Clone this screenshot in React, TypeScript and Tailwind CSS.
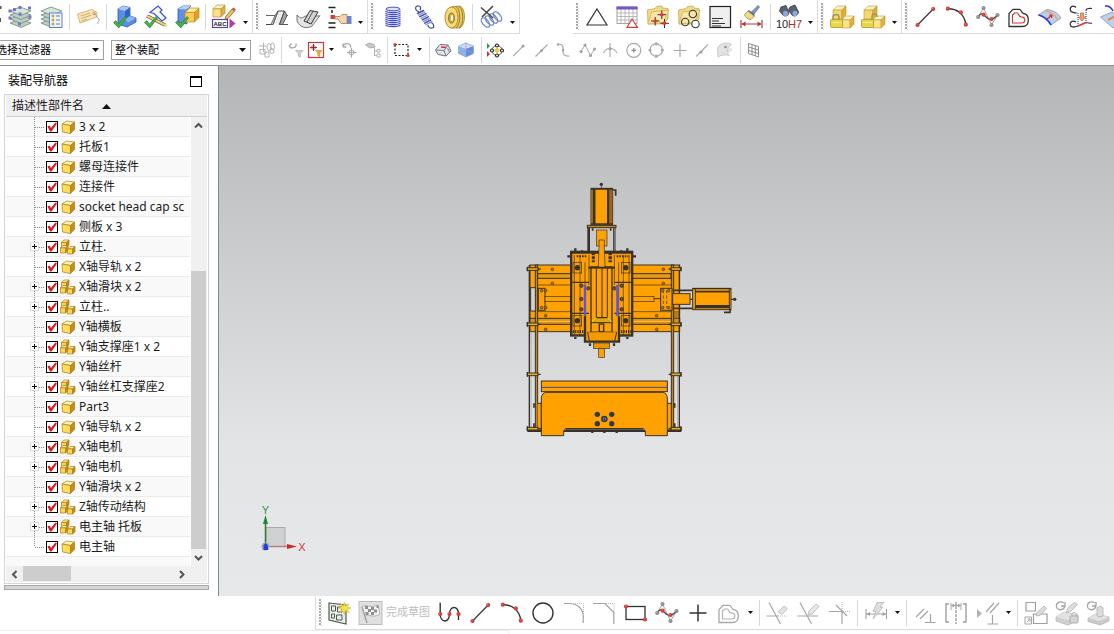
import { useState } from "react";
import type { ReactNode } from "react";

/* ---------- toolbar building blocks ---------- */

function Icon({ size = 26, children }: { size?: number; children: ReactNode }) {
  return (
    <svg width={size} height={size} viewBox={`0 0 ${size} ${size}`} fill="none" aria-hidden="true" className="shrink-0">
      {children}
    </svg>
  );
}

function Tool({ label, children }: { label: string; children: ReactNode }) {
  return (
    <button type="button" aria-label={label} className="flex w-[31px] shrink-0 items-center justify-center hover:bg-sky-50">
      <Icon>{children}</Icon>
    </button>
  );
}

function SmallTool({ label, children }: { label: string; children: ReactNode }) {
  return (
    <button type="button" aria-label={label} className="flex w-[23px] shrink-0 items-center justify-center hover:bg-sky-50">
      <Icon size={20}>{children}</Icon>
    </button>
  );
}

function More({ low = true }: { low?: boolean }) {
  return (
    <button type="button" aria-label="更多" className={low ? "flex w-[13px] shrink-0 items-center justify-center pt-3" : "flex w-[13px] shrink-0 items-center justify-center"}>
      <svg width="5" height="3" viewBox="0 0 5 3" aria-hidden="true">
        <path d="M0 0H5L2.500 3Z" fill="#111" />
      </svg>
    </button>
  );
}

function Sep({ tight = false }: { tight?: boolean }) {
  return (
    <span className={tight ? "flex w-[5px] shrink-0 items-center justify-center" : "flex w-[6px] shrink-0 items-center justify-center"}>
      <span className="h-[26px] w-px bg-[#d9d9d9]" />
    </span>
  );
}

function Grip() {
  return (
    <svg width="8" height="33" viewBox="0 0 8 33" className="shrink-0" aria-hidden="true">
      <path d="M4 3V30" stroke="#a9a9a9" strokeWidth="2" strokeDasharray="2 1" />
      <path d="M5.500 5V30" stroke="#d6d6d6" strokeWidth="1" strokeDasharray="1 2" />
    </svg>
  );
}

function Group({ children }: { children: ReactNode }) {
  return <div className="flex h-[34px] shrink-0 border-r border-b border-[#dcdcdc]">{children}</div>;
}

/* ---------- shared drawings ---------- */

const RED = "#d23a32";

function Dot({ x, y, c = RED, r = 2.1 }: { x: number; y: number; c?: string; r?: number }) {
  return (
    <>
      <circle cx={x} cy={y} r={r} fill={c} />
      <circle cx={x - 0.5} cy={y - 0.5} r={r / 3} fill="#fff" opacity="0.35" />
    </>
  );
}

const GreenCheck = () => (
  <path d="M1.500 18.500L4 16.800L6.500 20.200L13 12.500L14.500 14L6.800 24Z" fill="#4cae50" stroke="#2c8a3a" strokeWidth="0.8" />
);

const LineDrawing = () => (
  <>
    <path d="M4.500 21L20.200 5" stroke="#333" strokeWidth="1.200" />
    <Dot x={4.5} y={21} />
    <Dot x={20.2} y={5} />
  </>
);

const ArcDrawing = () => (
  <>
    <path d="M3.800 4.700C12 4.500 20.500 9 21.800 20.700" stroke="#333" strokeWidth="1.400" />
    <Dot x={3.8} y={4.7} />
    <Dot x={16.8} y={8.3} />
    <Dot x={21.8} y={20.7} />
  </>
);

const SplineDrawing = () => (
  <>
    <path d="M3.200 13L8.500 4L16.500 21L22.500 11" stroke="#a5a5a5" strokeWidth="1" />
    <path d="M3.200 13C6 8 8 10 10 12C13 15.500 17 17.500 22.500 11" stroke="#444" strokeWidth="1.200" />
    <Dot x={8.5} y={4} c="#8d8d8d" />
    <Dot x={3.2} y={13} c="#8d8d8d" />
    <Dot x={16.5} y={21} c="#8d8d8d" />
    <Dot x={22.5} y={11} c="#8d8d8d" />
    <Dot x={8.5} y={10.7} />
    <Dot x={16.5} y={15} />
  </>
);

function OffsetDrawing({ outer, inner }: { outer: string; inner: string }) {
  return (
    <>
      <path d="M3 22.500V9.500L7 5.300H13.500C15 5.300 15.300 9 17.500 9.500C21 10 22.300 13 22.300 16C22.300 20 20 22.500 16.500 22.500Z" stroke={outer} strokeWidth="1.300" />
      <path d="M6.500 19V11L8.500 9H11.500C12.500 9 12.500 12.500 15 12.800C18 13 18.800 14.500 18.800 16C18.800 18 17.500 19 15.500 19Z" stroke={inner} strokeWidth="1.200" />
    </>
  );
}

const Folder = () => (
  <>
    <path d="M1.500 6L9 4.500L10.500 2.500L16 2L16.500 4L22 4.500V15L17 20H2Z" fill="#f2d98a" stroke="#caa84e" strokeWidth="0.800" />
    <path d="M2 20L5.500 8L23 6L17.500 18.500Z" fill="#f8e6a8" stroke="#cfae56" strokeWidth="0.800" />
  </>
);

const Layers = () => (
  <>
    {[19, 15, 11, 7].map((t) => (
      <path key={t} d={`M3 ${t}L13 ${t - 4}L24 ${t}L14 ${t + 4.5}Z`} fill={t === 7 ? "#d3e6da" : "#bccdc3"} stroke="#7b9688" strokeWidth="0.900" />
    ))}
  </>
);

type CubeProps = { x: number; y: number; s: number; top?: string; left?: string; right?: string; line?: string; w?: number };

function Cube({ x, y, s, top = "#fff0a0", left = "#ffd652", right = "#c98c14", line = "#a67c1c", w = 0.7 }: CubeProps) {
  const d = s * 0.32;
  return (
    <g stroke={line} strokeWidth={w} strokeLinejoin="round">
      <path d={`M${x} ${y + d}L${x + d} ${y}H${x + s}L${x + s - d} ${y + d}Z`} fill={top} />
      <path d={`M${x} ${y + d}H${x + s - d}V${y + s}H${x}Z`} fill={left} />
      <path d={`M${x + s - d} ${y + d}L${x + s} ${y}V${y + s - d}L${x + s - d} ${y + s}Z`} fill={right} />
    </g>
  );
}

const BlueBracket = () => (
  <>
    <path d="M6 5L11 2L18 3.500V12L24 14V18L15 23L6 20Z" fill="#5b8de0" stroke="#2c58b0" strokeWidth="0.800" />
    <path d="M6 5L11 2L18 3.500L13 7Z" fill="#a9c8f6" />
    <path d="M13 7L18 3.500V12L13 15.500Z" fill="#2f62c4" />
    <path d="M13 15.500L18 12L24 14L16 18.500Z" fill="#8db5f2" />
  </>
);

function Locked({ open = false }: { open?: boolean }) {
  return (
    <>
      <Cube x={4} y={2} s={13} top="#fdf2bb" left="#f6d972" right="#dcae3c" line="#c0952c" w={0.6} />
      <Cube x={13} y={12} s={12} top="#fef6cf" left="#fbe48c" right="#e0b244" line="#c0952c" w={0.6} />
      <path d={open ? "M12 16V12.500C12 9 17 9 17 13" : "M4 16V13C4 9.500 10 9.500 10 13V16"} stroke="#9a9768" strokeWidth="1.500" />
      <rect x="1.500" y="15.500" width="12" height="8" rx="1" fill="#e8d64a" stroke="#a8962a" strokeWidth="0.800" />
      <path d="M2.500 18.500H12.500" stroke="#f6ec8d" strokeWidth="1" />
    </>
  );
}

/* ---------- toolbars ---------- */

function MainToolbar() {
  return (
    <div className="flex h-[34px] overflow-hidden">
      <Group>
        <svg width="4" height="33" viewBox="0 0 4 33" aria-hidden="true" className="shrink-0">
          <path d="M0 6H1.500V9H0ZM0 18H1V22H0Z" fill="#555" />
        </svg>
        <Tool label="图层设置">
          <Layers />
          {[[3, 7], [13, 3.5], [22.5, 4], [13, 10], [3, 14], [23, 13], [12.5, 20], [7.5, 5.5]].map(([x, y]) => (
            <rect key={`${x}-${y}`} x={x - 1.5} y={y - 1.5} width="3" height="3" fill="#7d74c4" />
          ))}
        </Tool>
        <Tool label="图层类别">
          <Layers />
          <rect x="11.500" y="9" width="12.500" height="14.500" fill="#eef3fc" stroke="#5e80c4" />
          <path d="M14 11H16V13H14ZM14 15H16V17H14ZM14 19H16V21H14Z" fill="#e8c84c" stroke="#9a8430" strokeWidth="0.500" />
          <path d="M18 12H22M18 16H22M18 20H22" stroke="#6c7fa8" />
        </Tool>
        <Sep />
        <Tool label="注释">
          <path d="M2.500 10L17 5.500L22 8.500L21.500 13L5 19Z" fill="#f9e4b8" stroke="#d8ae68" strokeWidth="0.900" />
          <path d="M5.500 12L15 9M6 14.500L16 11.300M6.500 17L12 15.200" stroke="#c49a5c" strokeWidth="0.800" />
          <circle cx="19" cy="9.500" r="1.200" fill="#fff" stroke="#a5793c" strokeWidth="0.700" />
          <path d="M19 9.500C22 10 21 14 24 15C25 17 22 18 23 20" stroke="#8f8f8f" strokeWidth="0.800" />
        </Tool>
        <Sep />
        <Tool label="检查零件">
          <BlueBracket />
          <GreenCheck />
        </Tool>
        <Tool label="检查草图">
          <path d="M7 8.500L15 2L19 6L17 8L23 14L19 17L11 9.500Z" fill="#f8faff" stroke="#3c4fd0" strokeWidth="1.200" />
          <path d="M4 12L22 21" stroke="#4f4a36" strokeWidth="3.600" />
          <path d="M4 12L24 22" stroke="#ead37a" strokeWidth="2.200" />
          <GreenCheck />
        </Tool>
        <Tool label="检查装配">
          <path d="M4 5L9 2H17L13 6V20L4 18Z" fill="#5f92e4" stroke="#2c58b0" strokeWidth="0.800" />
          <path d="M4 5L9 2H17L12 5.500Z" fill="#b5d0f8" />
          <Cube x={11} y={4} s={14} top="#ffe993" left="#fccd52" right="#e39e2c" line="#c48a20" />
          <GreenCheck />
        </Tool>
        <Sep />
        <Tool label="属性">
          <Cube x={2} y={1} s={12} top="#fdf3c2" left="#fae086" right="#dfae44" line="#bb9030" />
          <path d="M21 5L23.500 7L17 14.500L14 15.500L14.800 12.500Z" fill="#f0c35a" stroke="#8a5a2a" strokeWidth="0.800" />
          <path d="M21 5L22.500 3.500L24.800 5.500L23.500 7Z" fill="#c94a43" />
          <rect x="1.500" y="15.500" width="15" height="8" fill="#fff" stroke="#5a479c" strokeWidth="1.200" />
          <text x="9" y="21.600" textAnchor="middle" fontSize="6" fontWeight="bold" fontFamily="Liberation Sans, sans-serif" fill="#222">ABC</text>
          <path d="M18.500 14.500L24.500 19.500L18.500 24.500Z" fill="#b03ab0" />
        </Tool>
        <More />
      </Group>
      <Group>
        <Grip />
        <Tool label="凸台">
          <path d="M2 11.500H11M19 11.500H24" stroke="#666" strokeWidth="1" />
          <path d="M2 20.500H9L14 7H20.500L15.500 20.500" fill="#eceded" stroke="#444" strokeWidth="1" />
          <path d="M20.500 7L23 11.500L18.500 20.500H15.500Z" fill="#a4a7a6" stroke="#444" strokeWidth="0.900" />
          <path d="M14 7L11 11.500L7 20.500H9Z" fill="#c6c8c7" stroke="#555" strokeWidth="0.800" />
          <path d="M18.500 20.500H24" stroke="#555" strokeWidth="1" />
        </Tool>
        <Tool label="曲面凸台">
          <path d="M2 11C5 15 8 14 10 12L21 12C23 12 24 12 25 11.500L17 22C12 25 5 24 2 17Z" fill="#e2e4e3" stroke="#666" strokeWidth="0.900" />
          <path d="M9 17L15 6.500L23 8L16 20Z" fill="#cfd2d1" stroke="#333" strokeWidth="1" />
          <path d="M12 18L18 7.200" stroke="#444" strokeWidth="0.900" />
        </Tool>
        <Tool label="选择对象">
          <path d="M2.500 3.500H9.500M2.500 23.500H9.500M2.500 19H9.500" stroke="#222" strokeWidth="1.500" />
          <path d="M6 6V9" stroke="#222" strokeWidth="1.500" />
          <rect x="4.500" y="11" width="4.500" height="4" fill="#d0413c" />
          <path d="M9 12.500H14L16 10.500H21V19.500H15L12 15H9Z" fill="#f5d6ac" stroke="#b08a5e" strokeWidth="0.900" />
          <path d="M21 12H25.500V20H21Z" fill="#6c84d6" />
        </Tool>
        <More />
      </Group>
      <Group>
        <Grip />
        <Tool label="圆柱弹簧">
          <ellipse cx="14" cy="5" rx="7" ry="1.800" fill="#dfe3f8" stroke="#3442b4" strokeWidth="0.900" />
          {[7, 9, 11, 13, 15, 17, 19, 21].map((y) => (
            <path key={y} d={`M7 ${y}C7 ${y + 2} 21 ${y + 2} 21 ${y}`} stroke="#4150c0" strokeWidth="1.300" />
          ))}
          <path d="M7 5V21M21 5V21" stroke="#7f8ad6" strokeWidth="0.700" />
        </Tool>
        <Tool label="拉伸弹簧">
          <path d="M9 8C4 6 5 1 9 2C11 2.500 11 5 10 6M20 18C25 20 25 25 20 24C18 23.500 18 22 18 21" stroke="#3b478c" strokeWidth="1.200" />
          {[0, 1, 2, 3, 4, 5, 6, 7].map((i) => (
            <path key={i} d={`M${7.5 + i * 1.2} ${9.5 + i * 1.6}L${13.5 + i * 1.2} ${6.5 + i * 1.6}`} stroke={i % 2 ? "#8f9ad8" : "#3f4ba2"} strokeWidth="1.500" strokeLinecap="round" />
          ))}
        </Tool>
        <Tool label="碟形弹簧">
          <path d="M10 3L19 2C25 5 25 20 19 24L10 24Z" fill="#eccb58" stroke="#9c7d28" strokeWidth="0.800" />
          <path d="M15 2.500C20 6 20 20 15 24M18 2.500C23 6 23 20 18 24" stroke="#8c7534" strokeWidth="0.900" />
          <ellipse cx="10.500" cy="13.500" rx="6.500" ry="10.500" fill="#f6dc78" stroke="#a5862e" strokeWidth="0.900" />
          <ellipse cx="10.500" cy="14" rx="2.800" ry="5" fill="#d2ae48" stroke="#7c6018" strokeWidth="0.900" />
          <ellipse cx="11" cy="14" rx="1.200" ry="3" fill="#fff" />
        </Tool>
        <Sep />
        <Tool label="删除弹簧">
          {[0, 1, 2, 3].map((i) => (
            <ellipse key={i} cx={7.5 + i * 4} cy={18.5 - i * 2} rx="3" ry="5.500" transform={`rotate(-40 ${7.5 + i * 4} ${18.5 - i * 2})`} stroke="#6d83c8" strokeWidth="1.300" />
          ))}
          <path d="M3 3.500L15 14M15 2L4 13" stroke="#4a4a4a" strokeWidth="1.600" />
        </Tool>
        <More />
      </Group>
      <div className="ml-[53px] flex">
        <Group>
          <Grip />
          <Tool label="三角形符号">
            <path d="M13 5L23 21H3Z" stroke="#333" strokeWidth="1.200" />
          </Tool>
          <Tool label="表格">
            <rect x="2" y="3" width="20" height="16.500" fill="#fff" stroke="#999" strokeWidth="0.900" />
            <path d="M2 9H22M2 12.500H22M2 16H22M6 5V19.500M10 5V19.500M14 5V19.500M18 5V19.500" stroke="#aaa" strokeWidth="0.800" />
            <path d="M1.500 2.500H22.500V5.500H1.500Z" fill="#7656c8" />
            <path d="M17 15L22.500 23.300H12Z" fill="#fff" stroke="#c8403c" strokeWidth="1.200" />
          </Tool>
          <Tool label="点集">
            <Folder />
            <path d="M11.500 10.700H20M15.800 6.500V15M5 17H13.500M9.200 13V21.500M14.500 19.300H23M18.500 15V24" stroke="#333" strokeWidth="1" />
            <Dot x={15.8} y={10.7} c="#f0241c" r={1.8} />
            <Dot x={9.2} y={17} c="#f0241c" r={1.8} />
            <Dot x={18.5} y={19.3} c="#f0241c" r={1.8} />
          </Tool>
          <Tool label="圆集">
            <Folder />
            <g stroke="#333" strokeWidth="1.100">
              <circle cx="15.800" cy="10" r="3.700" />
              <circle cx="8.200" cy="18" r="3.700" />
              <circle cx="18.500" cy="20" r="3.700" fill="#fff" />
            </g>
          </Tool>
          <Tool label="技术要求">
            <rect x="2" y="2.500" width="20.500" height="21" fill="#eef0f0" stroke="#222" strokeWidth="1.200" />
            <path d="M4 14.500H15M4 17H11M4 19.500H17M4 22H13" stroke="#333" strokeWidth="1" />
          </Tool>
          <Tool label="尺寸样式">
            <path d="M2 16V24M23 16V24M3 20H22" stroke="#b0383a" strokeWidth="1.200" />
            <path d="M2.500 20L6.500 17.500V22.500ZM22.500 20L18.500 17.500V22.500Z" fill="#b0383a" />
            <path d="M19 1.500L20.500 3L15 10L12.500 8Z" fill="#7f98c6" stroke="#4d6492" strokeWidth="0.700" />
            <path d="M9 7L15.500 12L12 15.500C9 15.500 6 13 5.500 10.500Z" fill="#f3d982" stroke="#a58840" strokeWidth="0.800" />
            <path d="M9.500 6.500L15.500 11.500" stroke="#5b6a8a" strokeWidth="1.600" />
          </Tool>
          <Sep />
          <Tool label="查找公差">
            <path d="M5 3L10 1.500L13 9C12 12 9 13 7 11L3.500 7Z" fill="#5a6172" stroke="#2f3540" strokeWidth="0.800" />
            <path d="M14 3L19 1L22.500 8C22 12 18 13 16 11L12.500 6Z" fill="#5a6172" stroke="#2f3540" strokeWidth="0.800" />
            <ellipse cx="9.500" cy="9.500" rx="2.500" ry="2.800" fill="#8fa8dc" />
            <ellipse cx="19" cy="9.500" rx="2.500" ry="2.800" fill="#8fa8dc" />
            <text x="0" y="24" fontSize="11" fontFamily="Liberation Sans, sans-serif" fill="#222">10</text>
            <text x="12" y="24" fontSize="11" fontFamily="Liberation Sans, sans-serif" fill="#a82c2c">H7</text>
          </Tool>
          <More />
        </Group>
      </div>
      <Group>
        <Grip />
        <Tool label="锁定组件">
          <Locked />
        </Tool>
        <Tool label="解锁组件">
          <Locked open />
        </Tool>
        <More />
      </Group>
      <Group>
        <Grip />
        <Tool label="直线">
          <LineDrawing />
        </Tool>
        <Tool label="圆弧">
          <ArcDrawing />
        </Tool>
        <Tool label="艺术样条">
          <SplineDrawing />
        </Tool>
        <Tool label="偏置曲线">
          <OffsetDrawing outer="#333" inner={RED} />
        </Tool>
        <Tool label="面上偏置">
          <path d="M1.500 11C6 12 11 16 14 21L24 14C21 9 16 6 10 5.500Z" fill="#bcd0ea" stroke="#7f93b4" strokeWidth="0.800" />
          <path d="M1.500 11C6 12 11 16 14 21" stroke="#2836e0" strokeWidth="1.600" />
          <path d="M7.500 6.500C13 7.500 18 11 21 16" stroke="#f0a070" strokeWidth="1.400" />
          <path d="M10 15L15 11M15 11L12 11M15 11L14.500 14" stroke="#c8322c" strokeWidth="1.200" />
        </Tool>
        <Tool label="投影曲线">
          <path d="M8 3.500C5 1 2 2.500 2.200 5.500C2.500 9 6 8.500 8.500 9M8 18C5 16 2 17.500 2.200 20.500C2.500 23.500 6 23.500 10 22" stroke="#333" strokeWidth="1.300" />
          <path d="M18 6C19 4 21 4.500 24 4.500M18 19C20 18 22 20 24 19" stroke="#333" strokeWidth="1.200" />
          <path d="M10 9V22M18 6V19" stroke="#3a3ad0" strokeWidth="1.200" strokeDasharray="1 1" />
          <path d="M10 22L18 18.500" stroke="#e03028" strokeWidth="1.500" />
          <path d="M12.500 9H15.500V13H17.500L14 17L10.500 13H12.500Z" fill="#f0a060" stroke="#b0682c" strokeWidth="0.700" />
        </Tool>
        <Tool label="组合投影">
          <path d="M1.500 13L13 8L25 16L14 24Z" fill="#bcd0ea" stroke="#7f93b4" strokeWidth="0.800" />
          <path d="M6 2C10 1.500 12 3 14 7" stroke="#2836e0" strokeWidth="1.500" />
          <path d="M9 16L16 12" stroke="#e87830" strokeWidth="1.600" />
        </Tool>
      </Group>
    </div>
  );
}

function FilterSelect({ label, value, wide = false }: { label: string; value: string; wide?: boolean }) {
  return (
    <label className={wide ? "relative ml-[7px] flex w-[140px] shrink-0 items-center" : "relative -ml-2 flex w-28 shrink-0 items-center"}>
      <span className="sr-only">{label}</span>
      <select className="h-5 w-full appearance-none border border-[#a0a0a0] bg-white pl-[3px] text-[11px] leading-[18px] text-black">
        <option>{value}</option>
      </select>
      <svg width="7" height="4" viewBox="0 0 7 4" className="pointer-events-none absolute right-[5px]" aria-hidden="true">
        <path d="M0 0H7L3.500 4Z" fill="#111" />
      </svg>
    </label>
  );
}

const G = "#a8a8a8";

function SelectionBar() {
  return (
    <div className="flex h-8 overflow-hidden border-b border-[#8b8f90]">
      <div className="flex items-center">
        <FilterSelect label="类型过滤器" value="选择过滤器" />
        <FilterSelect label="选择范围" value="整个装配" wide />
      </div>
      <div className="ml-1 flex">
        <SmallTool label="装配约束">
          <g stroke="#b4b4b4" strokeWidth="1">
            <path d="M6.500 2.500V12M2 6H9.500M3 9.500H8V14H3ZM8 12H12V17H8Z" />
            <ellipse cx="12" cy="7" rx="2" ry="3.500" />
            <ellipse cx="15.500" cy="6.500" rx="2" ry="3.500" />
            <ellipse cx="15" cy="11" rx="2" ry="2.500" />
          </g>
        </SmallTool>
        <Sep />
        <SmallTool label="重置过滤器">
          <path d="M3 6C4 8.500 9 8.500 10 6V3.500M3 6L5.500 3.500M3 6L5.500 8.500" stroke={G} strokeWidth="1.300" />
          <path d="M9.500 10.500H17L14.300 13.500V17L12.300 16V13.500Z" fill="#d4d4d4" stroke="#b5b5b5" strokeWidth="0.800" />
        </SmallTool>
        <button type="button" aria-label="捕捉过滤器" aria-pressed="true" className="flex w-[18px] shrink-0 items-center justify-center">
          <svg width="18" height="18" viewBox="0 0 18 18" fill="none" aria-hidden="true">
            <rect x="1.500" y="1.500" width="15" height="15" fill="#fdfdfd" stroke="#cf3438" strokeWidth="1.200" />
            <path d="M6.500 3V10M3 6.500H10" stroke="#7c2f2f" strokeWidth="1" />
            <circle cx="6.500" cy="6.500" r="2" stroke="#b04a4a" strokeWidth="0.800" />
            <path d="M8.500 9.500H15L12.800 12V15.500L10.800 14.500V12Z" fill="#f0a53c" stroke="#cf8d2c" strokeWidth="0.600" />
          </svg>
        </button>
        <More low={false} />
        <SmallTool label="还原选择">
          <path d="M3 7C4 2.500 10 2.500 11 7.500M3 7V3.500M3 7H6.500" stroke={G} strokeWidth="1.300" />
          <path d="M11.500 8V17.500M7 12.500H16.500" stroke={G} strokeWidth="1" />
          <circle cx="11.500" cy="12.500" r="2.500" stroke={G} />
        </SmallTool>
        <SmallTool label="选择组件">
          <path d="M2.500 5L6 3L11 4.500L12 7L7 8Z" fill="#c9c9c9" stroke="#b0b0b0" />
          <path d="M11.500 8V16M11.500 11H14M11.500 15.500H14M14 9.500H17V12H14ZM14 14H17V17H14Z" stroke="#b5b5b5" />
        </SmallTool>
        <Sep />
        <SmallTool label="矩形选择">
          <rect x="3" y="4.500" width="13" height="11" stroke="#222" strokeWidth="1.200" strokeDasharray="2 1.500" />
          <Dot x={3} y={4.5} r={1.6} c="#d03030" />
          <Dot x={16} y={15.5} r={1.6} c="#d03030" />
        </SmallTool>
        <More low={false} />
        <Sep />
        <SmallTool label="线框显示">
          <path d="M1.500 10L6 4.500L14 5L17 11L12 16L4 14.500Z" fill="#dfe3ea" stroke="#6d7482" strokeWidth="1" />
          <path d="M2 10L10 10.500L12 16M10 10.500L14 5M13.500 8L15.500 12" stroke="#6d7482" strokeWidth="0.900" />
          <path d="M7 7L12 7.500" stroke="#d8352c" strokeWidth="1.600" />
        </SmallTool>
        <SmallTool label="着色显示">
          <path d="M1.500 6L9 8.500V17L1.500 13.500Z" fill="#86b6f2" />
          <path d="M9 8.500L16.500 6V13.500L9 17Z" fill="#5a8ede" />
          <path d="M1.500 6L9 3L16.500 6L9 8.500Z" fill="#c5dffb" />
          <path d="M9 2V10L2 14M9 10L16 13" stroke="#e58a9c" strokeWidth="0.700" />
          <path d="M1.500 6L9 3L16.500 6V13.500L9 17L1.500 13.500Z" stroke="#7da2d6" strokeWidth="0.700" />
        </SmallTool>
        <Sep />
        <SmallTool label="捕捉点">
          <path d="M1 3L4 6L1 9Z" fill="#27a536" />
          <path d="M1 11L4 14L1 17Z" fill="#cf2c2c" />
          <circle cx="11" cy="10.500" r="5" stroke="#555" strokeWidth="1" />
          <path d="M11 8L13.500 10.500L11 13L8.500 10.500Z" fill="#f4cf28" stroke="#c8a81c" strokeWidth="0.500" />
          {[[11, 5.5], [11, 15.5], [6, 10.5], [16, 10.5]].map(([x, y]) => (
            <circle key={`${x}-${y}`} cx={x} cy={y} r="1.500" fill="#fff" stroke="#222" strokeWidth="1.100" />
          ))}
        </SmallTool>
        <SmallTool label="端点">
          <path d="M4.200 16L13.800 6.300" stroke={G} strokeWidth="1.100" />
          <Dot x={14} y={6} c="#9c9c9c" r={1.5} />
        </SmallTool>
        <SmallTool label="中点">
          <path d="M3.500 16.500L15.500 4.500" stroke={G} strokeWidth="1.100" />
          <Dot x={9.5} y={10.5} c="#9c9c9c" r={1.5} />
        </SmallTool>
        <SmallTool label="控制点">
          <path d="M2.500 4.500C7 3.500 8.500 5.500 8 10C7.500 14.500 9.500 16.500 14.500 16" stroke={G} strokeWidth="1.200" />
          <Dot x={3} y={4.5} c="#9c9c9c" r={1.2} />
          <Dot x={8} y={10} c="#9c9c9c" r={1.2} />
        </SmallTool>
        <SmallTool label="极点">
          <path d="M3 11.500L7 5L12.500 15.500L16.500 9" stroke={G} strokeWidth="1" />
          {[[3, 11.5], [7, 5], [12.5, 15.5], [16.5, 9]].map(([x, y]) => (
            <Dot key={x} x={x} y={y} c="#9c9c9c" r={1.5} />
          ))}
        </SmallTool>
        <SmallTool label="交点">
          <path d="M2.500 13C5 7 13 7 16 13M9 3V17" stroke={G} strokeWidth="1.100" />
          <Dot x={9} y={8.7} c="#9c9c9c" r={1.5} />
        </SmallTool>
        <SmallTool label="圆心">
          <circle cx="9.800" cy="10.300" r="7" stroke={G} strokeWidth="1.200" />
          <path d="M7.500 10.300H12M9.800 8V12.500" stroke="#8c8c8c" strokeWidth="1.300" />
        </SmallTool>
        <SmallTool label="象限点">
          <circle cx="9.200" cy="10" r="6.200" stroke={G} strokeWidth="1.200" />
          {[[9.2, 3.8], [9.2, 16.2], [3, 10], [15.4, 10]].map(([x, y]) => (
            <Dot key={`${x}-${y}`} x={x} y={y} c="#a8a8a8" r={1.6} />
          ))}
        </SmallTool>
        <SmallTool label="现有点">
          <path d="M3.500 10.500H16.500M10 4V17" stroke={G} strokeWidth="1.200" />
        </SmallTool>
        <SmallTool label="曲线上的点">
          <path d="M3.200 16.500L14.800 4.500" stroke={G} strokeWidth="1.100" />
          <Dot x={8} y={12} c="#9c9c9c" r={1.5} />
        </SmallTool>
        <SmallTool label="面上的点">
          <path d="M1.500 8C4 3 10 2 15.500 4L11.500 9C11 12 12 14 13.500 15.500C9 14.500 5 15 2 17Z" fill="#e2e2e2" stroke="#c4c4c4" strokeWidth="0.800" />
          <path d="M11.500 9H16L13 12.500Z" fill="#f2f2f2" stroke="#c8c8c8" strokeWidth="0.700" />
          <Dot x={9.5} y={7} c="#8c8c8c" r={1.2} />
        </SmallTool>
        <Sep />
        <SmallTool label="有界栅格">
          <path d="M3.500 3.500L13.500 6.500V17L3.500 13.500ZM3.500 7L13.500 10M3.500 10.500L13.500 13.500M7 4.500V15M10.300 5.500V16" stroke="#8f8f8f" strokeWidth="1" />
        </SmallTool>
      </div>
    </div>
  );
}

/* ---------- assembly navigator ---------- */

type Item = { name: string; group?: boolean };

const ITEMS: Item[] = [
  { name: "3 x 2" },
  { name: "托板1" },
  { name: "螺母连接件" },
  { name: "连接件" },
  { name: "socket head cap sc" },
  { name: "侧板 x 3" },
  { name: "立柱.", group: true },
  { name: "X轴导轨 x 2" },
  { name: "X轴滑块 x 2", group: true },
  { name: "立柱..", group: true },
  { name: "Y轴横板" },
  { name: "Y轴支撑座1 x 2", group: true },
  { name: "Y轴丝杆" },
  { name: "Y轴丝杠支撑座2", group: true },
  { name: "Part3" },
  { name: "Y轴导轨 x 2" },
  { name: "X轴电机", group: true },
  { name: "Y轴电机", group: true },
  { name: "Y轴滑块 x 2" },
  { name: "Z轴传动结构", group: true },
  { name: "电主轴 托板", group: true },
  { name: "电主轴" },
];

function PartIcon({ group }: { group?: boolean }) {
  return (
    <svg width="16" height="16" viewBox="0 0 16 16" fill="none" className="shrink-0" aria-hidden="true">
      {group ? (
        <>
          <Cube x={1.500} y={1} s={7.500} />
          <Cube x={0.500} y={6.500} s={7.500} />
          <Cube x={7.500} y={7.500} s={7.500} />
        </>
      ) : (
        <g stroke="#a67c1c" strokeWidth="0.700" strokeLinejoin="round">
          <path d="M2 5L6.500 2L14.500 3L10.500 6.500Z" fill="#fff4b0" />
          <path d="M2 5L10.500 6.500V14.500L2.500 13Z" fill="#ffdc5c" />
          <path d="M10.500 6.500L14.500 3V10.500L10.500 14.500Z" fill="#c98c14" />
        </g>
      )}
    </svg>
  );
}

function TreeRow({ item, index, last }: { item: Item; index: number; last: boolean }) {
  const [checked, setChecked] = useState(true);
  const id = `node-${index}`;
  return (
    <li className="flex h-5 items-center overflow-hidden border-b border-[#ebebeb] odd:bg-[#f9f9f9] even:bg-white">
      <span className="relative flex h-5 w-10 shrink-0 items-center pl-6">
        <svg width="40" height="20" viewBox="0 0 40 20" className="absolute top-0 left-0" aria-hidden="true">
          <path d={last ? "M28.500 0V10" : "M28.500 0V20"} stroke="#8c8c8c" strokeDasharray="1 1" />
          <path d="M29 10.500H38" stroke="#8c8c8c" strokeDasharray="1 1" />
        </svg>
        {item.group && (
          <button type="button" aria-label={`展开 ${item.name}`} className="relative flex size-[9px] items-center justify-center border border-[#dcdcdc] bg-white">
            <svg width="5" height="5" viewBox="0 0 5 5" className="shrink-0" aria-hidden="true">
              <path d="M0 2.500H5M2.500 0V5" stroke="#111" />
            </svg>
          </button>
        )}
      </span>
      <span className="relative mr-[2px] size-3 shrink-0">
        <input id={id} type="checkbox" checked={checked} onChange={(e) => setChecked(e.target.checked)} className="peer block size-3 appearance-none border border-black bg-white" />
        <svg width="12" height="12" viewBox="0 0 12 12" className="pointer-events-none absolute top-0 left-0 hidden peer-checked:block" aria-hidden="true">
          <path d="M1.500 5.500L3.500 4.500L5 7L9.500 1.500L11 2.500L5.500 10.500H4Z" fill="#e3141c" />
        </svg>
      </span>
      <PartIcon group={item.group} />
      <label htmlFor={id} className="ml-[3px] whitespace-pre text-xs leading-5 text-[#1c1c1c]">
        {item.name}
      </label>
    </li>
  );
}

function Chevron({ d }: { d: string }) {
  return (
    <svg width="9" height="9" viewBox="0 0 9 9" fill="none" className="shrink-0" aria-hidden="true">
      <path d={d} stroke="#555" strokeWidth="2" />
    </svg>
  );
}

function Navigator() {
  return (
    <aside className="flex w-[219px] shrink-0 flex-col border-r border-[#7f8a8c] bg-white pr-[9px] pb-[6px] pl-1">
      <div className="flex h-7 items-center justify-between pt-[2px] pr-[7px] pl-1">
        <h2 className="text-xs leading-5 text-black">装配导航器</h2>
        <button type="button" aria-label="最大化" className="h-[11px] w-3 border border-t-2 border-black" />
      </div>
      <div className="flex flex-1 flex-col border border-[#d4d4d4] px-px pb-px">
        <button type="button" className="flex h-[22px] w-full items-center border-b border-[#d0d0d0] bg-[#f0f0f0] pt-px pl-[6px] text-xs leading-5 text-[#1c1c1c]">
          描述性部件名
          <svg width="9" height="5" viewBox="0 0 9 5" className="ml-[18px]" aria-hidden="true">
            <path d="M4.500 0L9 5H0Z" fill="#111" />
          </svg>
        </button>
        <div className="flex flex-1">
          <div className="flex min-w-0 flex-1 flex-col bg-[#f9f9f9]">
            <ul className="w-full">
              {ITEMS.map((item, i) => (
                <TreeRow key={i} item={item} index={i} last={i === ITEMS.length - 1} />
              ))}
            </ul>
          </div>
          <div className="ml-px flex w-4 shrink-0 flex-col bg-[#f0f0f0] pr-px">
            <button type="button" aria-label="向上滚动" className="flex h-[17px] items-center justify-center">
              <Chevron d="M1 6.500L4.500 3L8 6.500" />
            </button>
            <div className="flex flex-1 flex-col justify-end">
              <div className="h-[67%] bg-[#cdcdcd]" />
            </div>
            <button type="button" aria-label="向下滚动" className="flex h-[17px] items-center justify-center">
              <Chevron d="M1 3L4.500 6.500L8 3" />
            </button>
          </div>
        </div>
        <div className="flex h-4 items-stretch bg-[#f0f0f0] pr-[17px]">
          <button type="button" aria-label="向左滚动" className="flex w-[17px] items-center justify-center">
            <Chevron d="M6.500 1L3 4.500L6.500 8" />
          </button>
          <div className="flex-1">
            <div className="h-[15px] w-12 bg-[#cdcdcd]" />
          </div>
          <button type="button" aria-label="向右滚动" className="flex w-[17px] items-center justify-center">
            <Chevron d="M3 1L6.500 4.500L3 8" />
          </button>
        </div>
      </div>
      <div className="mt-px h-[5px] border border-[#a9a9a9] bg-[#d6d6d6]" />
    </aside>
  );
}

/* ---------- graphics window ---------- */

const O = "#ffa100";
const K = "#38322a";

function Machine() {
  return (
    <svg width="230" height="270" viewBox="0 0 690 810" fill="none" className="absolute top-[109px] left-[301px]" role="img" aria-label="机床装配">
      <g stroke={K} strokeWidth="3">
        {/* cross beam */}
        <rect x="30" y="270" width="449" height="200" fill={O} />
        <rect x="53" y="296" width="400" height="14" fill="#e39a1e" />
        <path d="M53 330H453M53 410H453" strokeWidth="2" />
        <rect x="30" y="430" width="449" height="18" fill="#d8921e" />
        <path d="M53 439H453" stroke="#ffb630" strokeWidth="4" />
        <rect x="32" y="338" width="16" height="70" fill="#d3d3d4" />
        <rect x="460" y="410" width="18" height="20" fill="#b97c14" strokeWidth="1" />
        {/* side posts */}
        <rect x="46" y="270" width="7" height="498" fill="#c98513" />
        <rect x="454" y="270" width="7" height="498" fill="#c98513" />
        <path d="M28 270V768M478 270V768" strokeWidth="4" />
        <path d="M33 474V768M473 474V768" stroke="#9a9a9c" strokeWidth="2" />
        <path d="M53 685H64V765H53M442 685H454V765H442" fill={O} />
        {/* lead screw */}
        <rect x="55" y="340" width="20" height="66" fill={O} />
        <rect x="75" y="364" width="88" height="16" fill={O} strokeWidth="2" />
        <rect x="338" y="364" width="64" height="16" fill={O} strokeWidth="2" />
        <path d="M402 371H422" />
        <rect x="422" y="340" width="34" height="66" fill={O} />
        <path d="M430 345V400M440 345V400" strokeWidth="2" strokeDasharray="10 6" />
      </g>
      {[[65, 347], [77, 347], [65, 398], [77, 398], [428, 347], [446, 347], [428, 398], [446, 398], [97, 283], [97, 325], [430, 283], [430, 325], [77, 422], [77, 463], [410, 422], [410, 463]].map(([x, y]) => (
        <circle key={`${x}-${y}`} cx={x} cy={y} r="4" fill="#b8780c" stroke={K} strokeWidth="2" />
      ))}
      {[282, 448, 598, 761].map((y) => (
        <g key={y} stroke={K} strokeWidth="3">
          <rect x="22" y={y - 4} width="32" height="8" fill="#e8a91c" />
          <rect x="453" y={y - 4} width="30" height="8" fill="#e8a91c" />
          <path d={`M22 ${y - 7}V${y + 7}M483 ${y - 7}V${y + 7}M54 ${y}H62M446 ${y}H454`} strokeWidth="4" />
        </g>
      ))}
      {/* z column */}
      <g stroke={K} strokeWidth="4">
        <rect x="152" y="229" width="186" height="254" fill={O} />
        <path d="M152 232H338" strokeWidth="8" />
        <path d="M154 232V483M336 232V483" strokeWidth="6" />
        <path d="M163 240V480M180 240V482M195 262V470M207 240V330M283 240V330M296 262V470M310 240V482M327 240V480" strokeWidth="2" />
        <path d="M152 322H207M283 322H338M152 415H207M283 415H338M152 480H195M296 480H338" strokeWidth="4" />
        <path d="M170 244H200M290 244H325" strokeWidth="6" strokeDasharray="5 3" />
        <path d="M158 470H195M296 470H335" strokeWidth="8" strokeDasharray="4 3" />
        <path d="M218 232V262M222 232V262M268 232V262M273 232V262" strokeWidth="5" strokeDasharray="9 3" />
        <path d="M142 244H152M338 244H348M166 220V229M322 220V229M186 226V230M304 226V230" strokeWidth="7" />
      </g>
      {[[172, 278], [317, 278], [172, 437], [317, 437]].map(([x, y]) => (
        <g key={`${x}-${y}`}>
          <rect x={x - 13} y={y - 16} width="26" height="32" fill="none" stroke={K} strokeWidth="2" />
          <circle cx={x} cy={y} r="8" fill={K} />
        </g>
      ))}
      {[[184, 332], [305, 332], [184, 403], [305, 403], [184, 372], [305, 372], [205, 340], [283, 340]].map(([x, y]) => (
        <circle key={`${x}-${y}`} cx={x} cy={y} r="5" fill="#7a5210" stroke={K} strokeWidth="3" />
      ))}
      <path d="M195 330V424M292 330V424" stroke="#5c54e8" strokeWidth="7" />
      {/* spindle */}
      <g stroke={K} strokeWidth="4">
        <path d="M195 424V500H297V424" strokeWidth="7" fill={O} />
        <rect x="213" y="276" width="63" height="196" fill={O} />
        <path d="M229 280V428M246 280V428M262 280V428" strokeWidth="3" />
        <path d="M205 278H285" strokeWidth="6" />
        <path d="M217 443L229 428H262L274 443" fill="#e7a412" />
        <path d="M213 443H276M203 472H290" strokeWidth="3" />
        <rect x="238" y="447" width="13" height="23" fill={O} />
        <path d="M203 472L208 498H284L290 472" fill="#f49a00" strokeWidth="3" />
        <rect x="220" y="504" width="49" height="16" fill="#ee9600" strokeWidth="2" />
        <rect x="236" y="521" width="17" height="26" fill={O} strokeWidth="2" />
        <path d="M166 486V492M322 486V492M210 505V513M282 505V513" strokeWidth="7" />
      </g>
      <path d="M217 441L229 428M274 441L262 428" stroke="#f2e02a" strokeWidth="4" />
      {/* top motor */}
      <g stroke={K} strokeWidth="3">
        <path d="M244 28V40" strokeWidth="2" />
        <path d="M278 45H287V62" strokeWidth="5" />
        <rect x="213" y="40" width="65" height="110" fill={O} />
        <rect x="267" y="42" width="11" height="106" fill="#9a6422" strokeWidth="1" />
        <path d="M222 42V148" strokeWidth="9" />
        <path d="M264 42V148" strokeWidth="6" />
        <path d="M213 42H278M213 147H278" strokeWidth="4" />
        <rect x="202" y="151" width="86" height="7" fill="#c88712" />
        <path d="M206 158V232" strokeWidth="8" />
        <path d="M285 158V230M281 158V230" strokeWidth="3" />
        <rect x="229" y="165" width="32" height="48" fill={O} strokeWidth="2" />
        <path d="M237 213V195H253V213L255 276H235Z" fill={O} strokeWidth="2" />
        <path d="M218 160V167M272 160V167" strokeWidth="5" />
      </g>
      <circle cx="244" cy="28" r="5" fill={K} />
      {/* side motor */}
      <g stroke={K} strokeWidth="3">
        <path d="M458 346H518M458 400H518" strokeWidth="5" />
        <rect x="458" y="356" width="52" height="32" fill={O} />
        <path d="M510 373H518M633 373H645" strokeWidth="4" />
        <rect x="518" y="340" width="115" height="64" fill={O} />
        <path d="M526 342V402M628 342V402" strokeWidth="3" />
        <path d="M526 350H628" strokeWidth="5" />
        <path d="M526 395H628" strokeWidth="10" />
        <path d="M518 341H633" strokeWidth="4" />
        <path d="M630 402V412H612" strokeWidth="5" />
      </g>
      <circle cx="644" cy="373" r="5" fill={K} />
      {/* table and base */}
      <path d="M22 768H484" stroke={K} strokeWidth="6" />
      <g stroke={K} strokeWidth="3">
        <rect x="64" y="618" width="378" height="32" fill={O} />
        <path d="M64 668Q66 653 80 652H427Q440 653 442 668V782H376V768L370 761H137L131 768V782H64Z" fill={O} />
        <path d="M137 762H370" strokeWidth="5" />
        <path d="M217 768V774M253 768V774M290 768V774" strokeWidth="7" />
        <path d="M42 685V698M42 745V758M464 685V698M464 745V758" strokeWidth="5" />
      </g>
      <path d="M65 637H441" stroke="#4b4a86" strokeWidth="3" />
      {[[232, 718], [275, 718], [232, 746], [275, 746], [253, 732]].map(([x, y]) => (
        <circle key={`${x}-${y}`} cx={x} cy={y} r={x === 253 ? 10 : 8} fill="#33383c" />
      ))}
      <circle cx="253" cy="732" r="4" stroke="#90959a" strokeWidth="2" />
    </svg>
  );
}

function Triad() {
  return (
    <svg width="56" height="54" viewBox="0 0 56 54" fill="none" className="absolute bottom-10 left-9" role="img" aria-label="坐标系">
      <rect x="11" y="25.500" width="19" height="19" fill="#d0d1d3" stroke="#ababad" />
      <path d="M10.500 44V21" stroke="#2c7c34" strokeWidth="1.500" />
      <path d="M10.500 13L13 22H8Z" fill="#1f8a2c" />
      <path d="M11 44.500H32" stroke="#b08080" strokeWidth="1.500" />
      <path d="M42 44.500L32 42V47Z" fill="#cf2a2a" />
      <circle cx="10.500" cy="44.500" r="4" fill="#a9abb0" />
      <path d="M8.500 48V43.500L10.500 41L13 43.500V48Z" fill="#1c3fe0" />
      <text x="10.500" y="12" textAnchor="middle" fontSize="11" fontFamily="Liberation Sans, sans-serif" fill="#3a9444">Y</text>
      <text x="47" y="49" textAnchor="middle" fontSize="11" fontFamily="Liberation Sans, sans-serif" fill="#d23a3a">X</text>
    </svg>
  );
}

function Viewport() {
  return (
    <main className="relative min-w-0 flex-1 overflow-hidden bg-[linear-gradient(180deg,#b4b5b7_0%,#e3e4e6_72%,#e7e8ea_100%)]">
      <Machine />
      <Triad />
    </main>
  );
}

/* ---------- sketch toolbar ---------- */

function SketchToolbar() {
  return (
    <footer className="h-[38px] shrink-0 overflow-hidden bg-white">
      <div className="ml-[315px] flex h-[34px] border-b border-l border-[#dcdcdc]">
        <Grip />
        <Tool label="草图">
          <path d="M2 3L19 5V24L2 20Z" fill="#eceee9" stroke="#4e5a50" strokeWidth="1.200" />
          <path d="M4.500 6H8.500V11H4.500ZM10.500 7H15V12H10.500ZM4.500 14H7.500V18H4.500ZM9.500 15H15V20H9.500Z" stroke="#4e5a50" strokeWidth="1" />
          <path d="M17.500 2L18.500 6L22 3.500L20 7L24 8L20 9.500L22.500 13L18.500 10.500L17.500 14.500L16.200 10.500L12.500 12.500L15 9L11 8L15 6.500L13 3L16.500 6Z" fill="#f6e23c" stroke="#b9a92a" strokeWidth="0.400" />
        </Tool>
        <button type="button" className="flex shrink-0 items-center text-[11px] text-[#bcbcbc]">
          <span className="flex w-[31px] shrink-0 items-center justify-center">
            <Icon>
              <rect x="1" y="1.500" width="23" height="23" fill="#e0e0e0" stroke="#bdbdbd" />
              <path d="M4 7C8 3 11 9 20 5L22 14C14 19 11 13 7 16Z" fill="#f4f4f4" stroke="#9c9c9c" strokeWidth="0.700" />
              <path d="M4 7L9 23" stroke="#a5a5a5" strokeWidth="1.500" />
              <path d="M7 6H10V9H7ZM13 7H16V10H13ZM10 9H13V12H10ZM16 9.500H19V12.500H16ZM7.500 12H10.500V15H7.500ZM13 12H16V15H13ZM18.500 5.500H20.500V8H18.500Z" fill="#8e8e8e" />
            </Icon>
          </span>
          <span className="w-12 text-left">完成草图</span>
        </button>
        <Tool label="轮廓">
          <path d="M3.200 2.700V14C3.200 23 12.500 23.500 12.500 14C12.500 5.500 21.500 5 21.500 14V20" stroke="#333" strokeWidth="1.400" />
          <Dot x={3.2} y={14} />
          <Dot x={12.5} y={14} />
          <Dot x={21.5} y={14} />
        </Tool>
        <Tool label="草图直线">
          <LineDrawing />
        </Tool>
        <Tool label="草图圆弧">
          <ArcDrawing />
        </Tool>
        <Tool label="圆">
          <circle cx="13" cy="13" r="10" stroke="#333" strokeWidth="1.400" />
        </Tool>
        <Tool label="圆角">
          <path d="M3 3.500H8C17 4 22 9 22.200 16V23" stroke="#a2a2a2" strokeWidth="1.200" />
          <path d="M10 3.500H22.500V14" stroke="#b5b5b5" strokeDasharray="1 1" />
        </Tool>
        <Tool label="倒斜角">
          <path d="M1 3.500H13L21.800 12.500V24" stroke="#a2a2a2" strokeWidth="1.200" />
          <path d="M14 3.500H22V12" stroke="#b5b5b5" strokeDasharray="1 1" />
        </Tool>
        <Tool label="矩形">
          <rect x="3" y="6.500" width="19" height="13" stroke="#333" strokeWidth="1.300" />
          <Dot x={3} y={6.5} />
          <Dot x={22} y={19.5} />
        </Tool>
        <Tool label="样条">
          <SplineDrawing />
        </Tool>
        <Tool label="点">
          <path d="M4.500 13H21.500M13 4.500V21.500" stroke="#333" strokeWidth="1.500" />
        </Tool>
        <Tool label="草图偏置">
          <OffsetDrawing outer="#a8a8a8" inner="#b4b4b4" />
        </Tool>
        <More low={false} />
        <Sep tight />
        <Tool label="快速修剪">
          <path d="M4 2.500L15.500 24M1.500 16H13" stroke="#a5a5a5" strokeWidth="1.200" />
          <path d="M13 16H23" stroke="#b5b5b5" strokeDasharray="1 1" />
          <path d="M13 12L19 6L22.500 8.500L17 14.500Z" fill="#e2e2e2" stroke="#c0c0c0" strokeWidth="0.900" />
        </Tool>
        <Tool label="快速延伸">
          <path d="M4 2.500L15.500 24M1.500 16H22" stroke="#a5a5a5" strokeWidth="1.200" />
          <path d="M12 15L13 11L20 4L23 6.500L16 14Z" fill="#e6e6e6" stroke="#bcbcbc" strokeWidth="0.900" />
        </Tool>
        <Tool label="制作拐角">
          <path d="M2 11.500H15V24M9 5L20 16" stroke="#a5a5a5" strokeWidth="1.200" />
          <path d="M15 2V11M16 11.500H23" stroke="#b5b5b5" strokeDasharray="1 1" />
        </Tool>
        <Sep tight />
        <Tool label="快速尺寸">
          <path d="M3 9V19M23.500 9V19M3 14H23" stroke="#a0a0a0" strokeWidth="1.100" />
          <path d="M3.500 14L7 12V16ZM23 14L19.500 12V16Z" fill="#a0a0a0" />
          <path d="M14 2.500H21L17 7H20L10 19L13 11.500H10Z" fill="#dedede" stroke="#b5b5b5" strokeWidth="0.800" />
        </Tool>
        <More low={false} />
        <Sep tight />
        <Tool label="几何约束">
          <path d="M4 17L12 9M8 19L16 11M13 22.500H23.500M18.500 22.500V14" stroke="#a5a5a5" strokeWidth="1.200" />
        </Tool>
        <Tool label="设为对称">
          <path d="M6 4H3V22H6M20 4H23V22H20" stroke="#a0a0a0" strokeWidth="1.400" />
          <path d="M13 2V24" stroke="#8e8e8e" strokeWidth="1.200" strokeDasharray="3 1" />
          <path d="M8 3V10M18 3V10M8 5.500H18" stroke="#a8a8a8" />
          <path d="M12.500 5.500L9.500 3.500V7.500ZM13.500 5.500L16.500 3.500V7.500Z" fill="#a0a0a0" />
        </Tool>
        <Tool label="显示约束">
          <path d="M3 9L8 13.500L3 18Z" fill="#b4b4b4" />
          <path d="M12 12L20 3M16 13L25 3M13.500 24H24M18.500 24V15" stroke="#a5a5a5" strokeWidth="1.200" />
        </Tool>
        <More low={false} />
        <Sep tight />
        <Tool label="转换参考">
          <path d="M3 2.500H12.500V11H3ZM10.500 14H24V23.500H10.500Z" stroke="#9e9e9e" strokeWidth="1.200" />
          <path d="M2 17H8.500V24H2ZM4 22L7 19M7 19H4.500M7 19V21.500" stroke="#a5a5a5" />
          <path d="M13 16L14 12.500L21 6L23.500 8.500L17 15.500Z" fill="#dcdcdc" stroke="#b0b0b0" strokeWidth="0.800" />
        </Tool>
        <Tool label="自动约束">
          <path d="M2 17L10 12L24 15V20L14 25L2 21Z" fill="#cfcfcf" stroke="#b8b8b8" strokeWidth="0.800" />
          <path d="M2 17L10 12L24 15L14 20Z" fill="#e2e2e2" />
          <path d="M10 3C5 0 1 4 3 8C5 11 10 10 11 6M11 2V6H7" stroke="#a5a5a5" strokeWidth="1.300" />
          <path d="M12 13L14 8L20 2.500L23.500 4.500L16 12Z" fill="#dedede" stroke="#b0b0b0" strokeWidth="0.800" />
          <rect x="16" y="16" width="8" height="7" rx="1" fill="#d6d6d6" stroke="#b0b0b0" />
          <path d="M18 16V14C18 12 22 12 22 14V16" stroke="#b0b0b0" />
        </Tool>
        <Tool label="关联草图">
          <path d="M3 18L11 14L24 17V21L15 25L3 21.500Z" fill="#cacaca" stroke="#b8b8b8" strokeWidth="0.800" />
          <path d="M3 18L11 14L24 17L15 21Z" fill="#e2e2e2" />
          <path d="M12 8L15 6L18 7.500V16L14 17L12 16Z" fill="#dcdcdc" stroke="#b0b0b0" strokeWidth="0.800" />
          <path d="M10 3C5 0 1 4 3 8C5 11 10 10 11 6M11 2V6H7" stroke="#a5a5a5" strokeWidth="1.300" />
        </Tool>
      </div>
      <div className="h-1 w-[509px] border-t border-r border-[#efefef]" />
    </footer>
  );
}

export default function App() {
  return (
    <div className="flex min-h-screen flex-col overflow-hidden bg-white font-['Noto_Sans','Noto_Sans_CJK_SC',sans-serif]">
      <header className="shrink-0 bg-white">
        <MainToolbar />
        <SelectionBar />
      </header>
      <div className="flex flex-1">
        <Navigator />
        <Viewport />
      </div>
      <SketchToolbar />
    </div>
  );
}
